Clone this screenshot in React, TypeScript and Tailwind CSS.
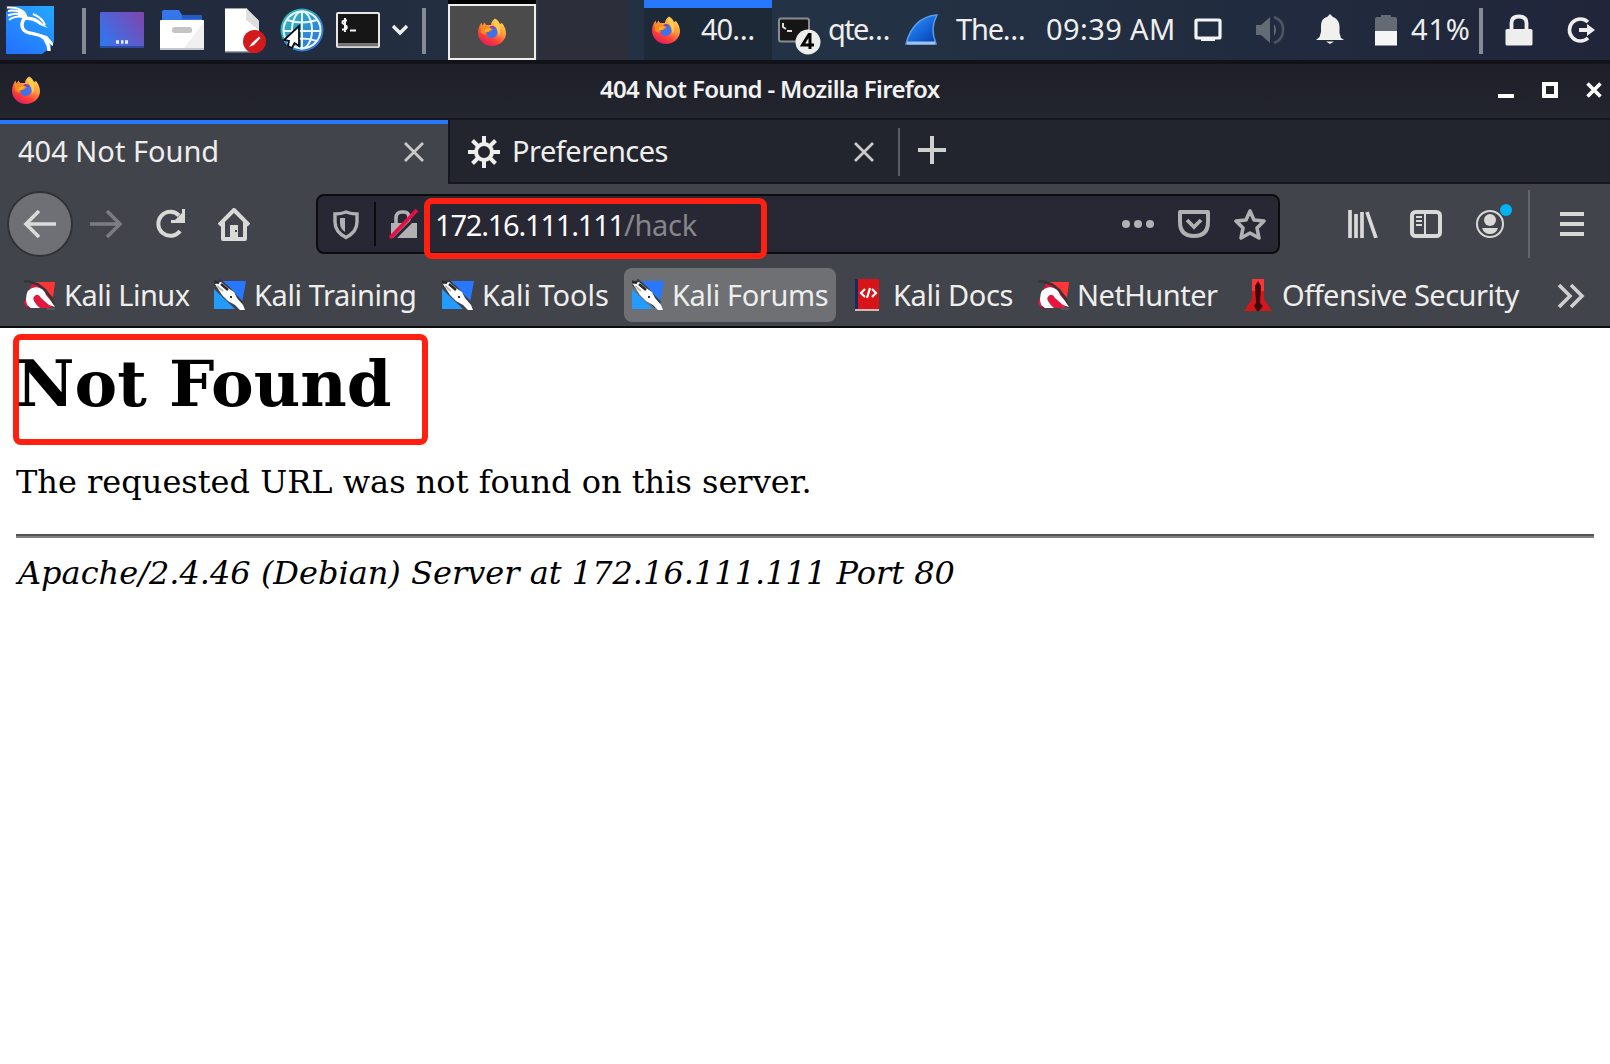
import type { ReactNode } from "react";

function Icon({ w, h, className = "", children }: { w: number; h: number; className?: string; children: ReactNode }) {
  return (
    <svg width={w} height={h} viewBox={`0 0 ${w} ${h}`} className={`block shrink-0 ${className}`} fill="none">
      {children}
    </svg>
  );
}

function Firefox({ className = "" }: { className?: string }) {
  return (
    <Icon w={28} h={28} className={className}>
      <defs>
        <linearGradient id="ffx" x1="22" y1="2" x2="8" y2="27" gradientUnits="userSpaceOnUse">
          <stop offset="0" stopColor="#ffd84f" />
          <stop offset="0.4" stopColor="#ff9640" />
          <stop offset="0.72" stopColor="#ff4038" />
          <stop offset="1" stopColor="#e01f5c" />
        </linearGradient>
      </defs>
      <path
        d="M17 0.5C20 2 21 4 22 6L24 5C27 9 28 12 28 16C27.500 23 21 28 14 28C6 28 0 22 0 14.500C0 10.500 1.500 7.500 3.500 4.500L4.500 7.500L6.500 4.500L8 7L13 7C13 4 15 2 17 0.500Z"
        fill="url(#ffx)"
      />
      <path d="M9 12L13 9L18 10C20 13 20 16 18 18C15.500 21 11 20.500 9 18Z" fill="#3d72e8" />
      <path d="M11 9.500C13 7.500 16 7.500 18 10L15 11Z" fill="#8345b5" />
      <path d="M3 8L8 7.500L12 10L15 11L11 14L8 14L7 17L3 15Z" fill="#ff8a1e" />
      <path d="M7 11L13 10.500L10 13.500L7 14Z" fill="#ffb52b" />
      <path d="M17 2C21 5 24 10 21 18C19 15 21 11 17 8C15.500 6 16 4 17 2Z" fill="#ffd351" opacity="0.8" />
    </Icon>
  );
}

function KaliDragon() {
  return (
    <Icon w={48} h={48} className="ml-1.5">
      <defs>
        <linearGradient id="kali" x1="40" y1="0" x2="8" y2="48" gradientUnits="userSpaceOnUse">
          <stop offset="0" stopColor="#25a5ff" />
          <stop offset="1" stopColor="#2472ff" />
        </linearGradient>
      </defs>
      <path d="M0 0H48V36L44 42L36 48H0Z" fill="url(#kali)" />
      <path d="M0 0H9L4 3L0 6Z" fill="#3a4152" />
      <path
        d="M1 1.500C7 1 14 2 19 7M2 5C8 4 14 5 18 9M2 9.500C8 7 13 7 18 10M3 14C8 10 13 10 19 11"
        stroke="#fff"
        strokeWidth="2"
      />
      <path d="M12 3L20 7L22 12L19 14L12 10Z" fill="#fff" />
      <path d="M19 12C15 16 15 22 19 25C24 29 33 26 39 33C41 36 43 40 43 45" stroke="#fff" strokeWidth="3.400" />
      <path d="M34 28L41 30L47 37L47 40L41 36Z" fill="#fff" />
      <path d="M20 11C26 10 31 12 36 17L42 22L34 19C29 15 25 14 20 14Z" fill="#fff" />
      <path d="M27 8C32 10 37 14 39 19" stroke="#fff" strokeWidth="2" />
    </Icon>
  );
}

function Separator({ className }: { className: string }) {
  return <div className={`h-[46px] w-1 shrink-0 bg-[#858b94] ${className}`} />;
}

function Panel() {
  return (
    <header className="flex h-15 items-start bg-linear-to-r from-[#22283c] via-[#233345] to-[#20253a] text-[29px] leading-[38px] whitespace-nowrap text-[#eeeeec]">
      <div className="pt-1.5">
        <KaliDragon />
      </div>
      <Separator className="mt-2 ml-7" />
      <Icon w={44} h={36} className="mt-3 ml-[14px]">
        <defs>
          <linearGradient id="desk" x1="2" y1="34" x2="42" y2="4" gradientUnits="userSpaceOnUse">
            <stop offset="0" stopColor="#2f77f2" />
            <stop offset="1" stopColor="#7b49b0" />
          </linearGradient>
        </defs>
        <rect width="44" height="36" rx="1" fill="url(#desk)" />
        <path d="M0 34H44V36H0Z" fill="#2c4b9e" />
        <path d="M16 30h3M21 30h2.500M25 30h3" stroke="#e6ebfa" strokeWidth="3.500" />
      </Icon>
      <Icon w={44} h={40} className="mt-2.5 ml-4">
        <path d="M2 2Q2 0 4 0H19L22 5H40Q42 5 42 8V12H2Z" fill="#3577ea" />
        <path d="M22 5h20v4H22Z" fill="#285bc2" />
        <rect y="10" width="44" height="30" rx="1" fill="#fff" />
        <path d="M44 12V38H24Z" fill="#f0f0f0" />
        <path d="M0 38H44V40H0Z" fill="#c5c6c9" />
        <rect x="12" y="17" width="20" height="6" rx="2.500" fill="#c4c4c4" />
      </Icon>
      <Icon w={42} h={46} className="mt-2 ml-5">
        <path d="M1 0H22L35 13V44H1Z" fill="#fff" />
        <path d="M22 0L35 13V22L22 12Z" fill="#dedede" />
        <path d="M1 43H28V44.500H1ZM1 0H22V1H1Z" fill="#9ea1a7" />
        <circle cx="30.500" cy="33.500" r="11.500" fill="#d4191c" />
        <path d="M25 39L28 35L35 28.500L36.500 30L30 37Z" fill="#fff" />
      </Icon>
      <Icon w={46} h={46} className="mt-2 ml-[13px]">
        <defs>
          <linearGradient id="globe" x1="4" y1="6" x2="38" y2="40" gradientUnits="userSpaceOnUse">
            <stop offset="0" stopColor="#2cbabc" />
            <stop offset="1" stopColor="#3371df" />
          </linearGradient>
        </defs>
        <circle cx="23" cy="22" r="21.500" fill="url(#globe)" />
        <g stroke="#e8f6f9" strokeWidth="2">
          <circle cx="23" cy="22" r="18.500" />
          <ellipse cx="23" cy="22" rx="10" ry="18.500" />
          <path d="M23 3V41M4 23H42M8 12Q23 17 38 12M8 33Q23 28 38 33" />
        </g>
        <path d="M20 18V38L15.500 35L13 40L9 38L10 33L5 32Z" fill="#fff" stroke="#0c0e12" strokeWidth="1.800" />
      </Icon>
      <Icon w={44} h={36} className="mt-3 ml-[11px]">
        <rect x="1" y="1" width="42" height="34" rx="1" fill="#161616" stroke="#e6e6e6" strokeWidth="2" />
        <path d="M2 32H42" stroke="#777" strokeWidth="2" />
        <path d="M2 34.500H42" stroke="#c4c4c4" strokeWidth="2" />
        <path d="M11 8.500H8.500Q6 9 6.500 11L10.500 14Q11.500 17 9 17.500H6M9 6V20M14 18.500H20" stroke="#f4f4f4" strokeWidth="2" />
      </Icon>
      <Icon w={18} h={12} className="mt-6 ml-[11px]">
        <path d="M2 2L9 9L16 2" stroke="#eeeeec" strokeWidth="3.400" />
      </Icon>
      <Separator className="mt-2 ml-[13px]" />
      <div className="ml-[22px] h-15 w-22 shrink-0 bg-black pt-1">
        <div className="flex h-14 items-start border-2 border-[#eeeeec] bg-[#4b4b4b]">
          <Firefox className="mt-3 ml-7" />
        </div>
      </div>
      <div className="h-15 w-[92px] shrink-0 border-l-2 border-[#35384a] bg-[#2c2e39]" />
      <div className="ml-4 flex h-15 w-32 shrink-0 items-start border-t-8 border-[#2777ff] bg-[#1d2936]">
        <Firefox className="mt-2 ml-2" />
        <span className="mt-0.5 ml-[21px] tracking-[-1px]">40…</span>
      </div>
      <Icon w={46} h={38} className="mt-[17px] ml-1.5">
        <rect x="1" y="1.500" width="30" height="23" rx="2" fill="#151515" stroke="#898d90" strokeWidth="2" />
        <path d="M5 6V10L8 12M9 14H14" stroke="#ddd" strokeWidth="2" />
        <circle cx="30" cy="25" r="12.500" fill="#eeeeec" />
        <path d="M32 32V17.500H31L24.500 28H36" stroke="#080808" strokeWidth="3" />
      </Icon>
      <span className="mt-2.5 ml-1 w-16 tracking-[-1.7px]">qte…</span>
      <Icon w={34} h={32} className="mt-3.5 ml-[13px]">
        <defs>
          <linearGradient id="fin" x1="8" y1="4" x2="28" y2="28" gradientUnits="userSpaceOnUse">
            <stop offset="0" stopColor="#2589ff" />
            <stop offset="1" stopColor="#0645b5" />
          </linearGradient>
        </defs>
        <path d="M32 1C27 10 27 20 31 30H1C5 14 15 2 32 1Z" fill="url(#fin)" stroke="#5d9be4" strokeWidth="1.500" />
        <path d="M2 29H30" stroke="#9cc3f3" strokeWidth="3" />
      </Icon>
      <span className="mt-2.5 ml-[17px] w-[72px] tracking-[-1.2px]">The…</span>
      <span className="mt-2.5 ml-[18px] w-[131px] tracking-[0.4px]">09:39 AM</span>
      <Icon w={28} h={24} className="mt-[18px] ml-[17px]">
        <rect x="2" y="2" width="24" height="18" rx="1" stroke="#f4f4f4" strokeWidth="3.200" />
        <path d="M7 20.500H21V23H7Z" fill="#f4f4f4" />
      </Icon>
      <Icon w={30} h={30} className="mt-[15px] ml-[33px]">
        <path d="M1 10H6L15 2V28L6 20H1Z" fill="#636b75" />
        <path d="M19 9Q23 15 19 21Z" fill="#636b75" />
        <path d="M19 2Q29 6 28 15Q28 25 19 28" stroke="#4b5662" strokeWidth="2.600" />
      </Icon>
      <Icon w={28} h={30} className="mt-[14px] ml-[31px]">
        <path d="M14 0L17 3C22 5 23.500 9 23.500 13V19L25 24L28 26H0L3.500 23L5 18V12C5 7 7 4 11 3ZM10 27.500H18L14 30Z" fill="#f0f0ef" />
      </Icon>
      <Icon w={24} h={32} className="mt-[14px] ml-[30px]">
        <path d="M7 1H17V3H21Q23 3 23 5V19H1V5Q1 3 3 3H7Z" fill="#646b75" />
        <path d="M1 17H23V31.500H1Z" fill="#f5f5f5" />
      </Icon>
      <span className="mt-2.5 ml-[13px] w-[64px] tracking-[0.8px]">41%</span>
      <Separator className="mt-2 ml-1" />
      <Icon w={28} h={32} className="mt-[14px] ml-[22px]">
        <rect x="0.500" y="15" width="27" height="16.500" rx="1.500" fill="#eeeeec" />
        <path d="M6.500 16V9Q6.500 2.500 14 2.500T21.500 9V16" stroke="#eeeeec" strokeWidth="3.800" />
      </Icon>
      <Icon w={30} h={28} className="mt-4 ml-[33px]">
        <path d="M22 6A11 11 0 1 0 22 22" stroke="#eeeeec" strokeWidth="3.600" />
        <path d="M13 12H21V8L29 14L21 20V16H13Z" fill="#eeeeec" />
      </Icon>
    </header>
  );
}

function TitleBar() {
  return (
    <div className="flex h-15 items-start border-t-4 border-b-2 border-t-[#111318] border-b-[#17181e] bg-linear-to-b from-[#1e1f28] to-[#23252e]">
      <Firefox className="mt-3 ml-3" />
      <h1 className="mt-[9px] ml-[560px] w-[342px] text-[24px] leading-8 font-semibold tracking-[-0.67px] whitespace-nowrap text-[#f2f2f2]">
        404 Not Found - Mozilla Firefox
      </h1>
      <div className="mt-[18px] ml-auto flex gap-7 pr-2">
        <Icon w={16} h={16}>
          <path d="M0 14H16" stroke="#fff" strokeWidth="4" />
        </Icon>
        <Icon w={16} h={16}>
          <rect x="2" y="2" width="12" height="12" stroke="#fff" strokeWidth="4" />
        </Icon>
        <Icon w={16} h={16}>
          <path d="M1.500 1.500L14.500 14.500M14.500 1.500L1.500 14.500" stroke="#fff" strokeWidth="3.600" />
        </Icon>
      </div>
    </div>
  );
}

function Close({ className }: { className: string }) {
  return (
    <Icon w={20} h={20} className={className}>
      <path d="M1 1L19 19M19 1L1 19" stroke="#c9c9c9" strokeWidth="2.800" />
    </Icon>
  );
}

function TabStrip() {
  return (
    <div className="flex h-16 shrink-0 text-[29px] leading-[38px] whitespace-nowrap text-[#eeeeec]">
      <div className="flex w-[448px] items-start border-t-4 border-[#2777ff] bg-[#42444b]">
        <span className="mt-2 ml-[18px] w-[210px]">404 Not Found</span>
        <Close className="mt-[18px] ml-[176px]" />
      </div>
      <div className="flex flex-1 items-start border-b-2 border-l-2 border-[#17181e] bg-[#23252e]">
        <Icon w={32} h={32} className="mt-4 ml-[18px]">
          <g stroke="#eeeeec" strokeWidth="4">
            <path d="M16 0V8M16 24V32M0 16H8M24 16H32M4.500 4.500L10 10M22 22L27.500 27.500M27.500 4.500L22 10M10 22L4.500 27.500" />
            <circle cx="16" cy="16" r="8" />
          </g>
        </Icon>
        <span className="mt-3 ml-3 w-[160px] tracking-[-0.5px]">Preferences</span>
        <Close className="mt-[22px] ml-[182px]" />
        <div className="mt-2 ml-6 h-12 w-0.5 bg-[#5b5d64]" />
        <Icon w={28} h={28} className="mt-4 ml-[18px]">
          <path d="M14 0V28M0 14H28" stroke="#d0d0d0" strokeWidth="4" />
        </Icon>
      </div>
    </div>
  );
}

function NavBar() {
  return (
    <div className="flex h-[76px] items-start">
      <div className="mt-[7px] ml-[7px] flex size-[66px] shrink-0 items-center justify-center rounded-full border-2 border-[#303238] bg-[#6f7075]">
        <Icon w={34} h={30}>
          <path d="M33 15H3M16 2L3 15L16 28" stroke="#dadad8" strokeWidth="3.600" />
        </Icon>
      </div>
      <Icon w={34} h={30} className="mt-[25px] ml-4">
        <path d="M1 15H31M18 2L31 15L18 28" stroke="#7c7d81" strokeWidth="3.600" />
      </Icon>
      <Icon w={32} h={30} className="mt-[25px] ml-8">
        <path d="M25 22A12 12 0 1 1 24 6.500" stroke="#d9d9d7" strokeWidth="4" />
        <path d="M30 0V14H16V11H20L27 4V0Z" fill="#d9d9d7" />
      </Icon>
      <Icon w={32} h={34} className="mt-6 ml-[31px]">
        <path d="M1 17L16 2L31 17M5 14V31H27V14" stroke="#d9d9d7" strokeWidth="4" strokeLinejoin="round" />
        <path d="M12 17H20V32H12Z" fill="#d9d9d7" />
        <path d="M17 22h2v2h-2Z" fill="#42444b" />
      </Icon>
      <div className="mt-2.5 ml-[66px] flex h-[60px] w-[964px] shrink-0 items-start rounded-lg border-2 border-[#0c0c0f] bg-[#272834]">
        <Icon w={26} h={30} className="mt-3.5 ml-[15px]">
          <path d="M2 4Q8 4 13 2Q18 4 24 4V12Q24 22 13 27.500Q2 22 2 12Z" stroke="#b1b1b3" strokeWidth="3.400" />
          <path d="M7 8H12V22Q7 19 7 13Z" fill="#b1b1b3" />
        </Icon>
        <div className="mt-1.5 ml-[15px] h-11 w-0.5 bg-[#0c0c0f]" />
        <Icon w={30} h={30} className="mt-[13px] ml-[13px]">
          <path d="M2 14H28V29H2Z" fill="#b1b1b3" />
          <path d="M7 15V9Q7 3 13 3H15Q20 3 20 9V15" stroke="#b1b1b3" strokeWidth="3.600" />
          <path d="M4 31L30 5" stroke="#272834" strokeWidth="3" />
          <path d="M1 29L28 1" stroke="#e80f46" strokeWidth="3.800" />
        </Icon>
        <div className="mt-0.5 ml-[5px] flex h-[61px] w-[343px] shrink-0 items-start rounded-lg border-6 border-[#ff2012] pl-[5px] text-[29px] leading-[38px] tracking-[-1.2px] whitespace-nowrap">
          <span className="mt-0.5 text-[#fbfbfb]">172.16.111.111</span>
          <span className="mt-0.5 tracking-[-0.3px] text-[#86868a]">/hack</span>
        </div>
        <Icon w={32} h={8} className="mt-6 ml-[355px]">
          <circle cx="4" cy="4" r="4" fill="#b1b1b3" />
          <circle cx="16" cy="4" r="4" fill="#b1b1b3" />
          <circle cx="28" cy="4" r="4" fill="#b1b1b3" />
        </Icon>
        <Icon w={32} h={28} className="mt-[14px] ml-6">
          <path d="M2 2H30V12Q30 26 16 26T2 12Z" stroke="#b1b1b3" strokeWidth="4" strokeLinejoin="round" />
          <path d="M9 10L16 17L23 10" stroke="#b1b1b3" strokeWidth="3.800" />
        </Icon>
        <Icon w={32} h={32} className="mt-3 ml-6">
          <path d="M16 3L20 12L30 13L23 20L25 30L16 25L7 30L9 20L2 13L12 12Z" stroke="#b1b1b3" strokeWidth="3.600" strokeLinejoin="round" />
        </Icon>
      </div>
      <Icon w={30} h={28} className="mt-[26px] ml-[68px]">
        <path d="M2 0V28M8 4V28M14 2V28M19 2L28 28" stroke="#d9d9d7" strokeWidth="3.700" />
      </Icon>
      <Icon w={32} h={28} className="mt-[26px] ml-8">
        <rect x="2" y="2" width="28" height="24" rx="3.500" stroke="#d9d9d7" strokeWidth="4" />
        <path d="M15 2V26M6 7H12M6 11H12M6 15H12" stroke="#d9d9d7" strokeWidth="2" />
      </Icon>
      <div className="relative mt-[26px] ml-[34px]">
        <Icon w={28} h={28}>
          <circle cx="14" cy="14" r="13" stroke="#d9d9d7" strokeWidth="2" />
          <circle cx="14" cy="10" r="6" fill="#d9d9d7" />
          <path d="M6 18H22Q20 24 14 24T6 18Z" fill="#d9d9d7" />
        </Icon>
        <span className="absolute -top-1.5 left-6 size-3 rounded-full bg-[#00b3f4]" />
      </div>
      <div className="mt-1.5 ml-6 h-[68px] w-0.5 bg-[#62646a]" />
      <Icon w={24} h={24} className="mt-7 ml-[30px]">
        <path d="M0 2H24M0 12H24M0 22H24" stroke="#d9d9d7" strokeWidth="4" />
      </Icon>
    </div>
  );
}

function RedKali() {
  return (
    <Icon w={32} h={30}>
      <path d="M9 2H31L29 15L27 28H3L0 23L4 12Z" fill="#e3173d" />
      <path d="M9 2H31L29 17L15 6Z" fill="#ff3538" />
      <path d="M0 1.500H5L14 4.500L21 10L27 18L30 25" stroke="#3a3338" strokeWidth="2.600" />
      <path d="M2 19Q2 8 12 7Q20 8 22 15L27 21L31 27L25 25L17 18Q15 14 12 15Q8 17 10 21Q12 25 16 28H7Q2 26 2 19Z" fill="#fff" />
      <path d="M2 28L4 26L7 29Z" fill="#8b1034" />
      <path d="M23 29H31" stroke="#55565a" strokeWidth="2" />
    </Icon>
  );
}

function BlueKali() {
  return (
    <Icon w={32} h={32}>
      <path d="M8 2H32L28 24L24 20Z" fill="#2777ff" />
      <path d="M0 10L21 30H0Z" fill="#249cff" />
      <path d="M3 3L13 12L19 19L26 26" stroke="#3a3d42" strokeWidth="9" />
      <path d="M1 5L7 3L14 9L20 13L23 19L29 26L31 31L26 31L21 26L14 22L8 16Z" fill="#fff" />
      <path d="M0 2.500L5 4M7 5L14 11" stroke="#292929" strokeWidth="2.500" />
      <path d="M3 7L9 12" stroke="#bdb9b5" strokeWidth="2" />
      <path d="M16 17h2v2h-2Z" fill="#333" />
    </Icon>
  );
}

function DocsBook() {
  return (
    <Icon w={28} h={32}>
      <path d="M1 0H5V30H1Z" fill="#172a63" />
      <path d="M4 0H25V30H4Z" fill="#d81419" />
      <path d="M1 30H25V32H1Z" fill="#d6b5b5" />
      <path d="M11 10L7 14L11 18M18 10L22 14L18 18M16 9L13 19" stroke="#fff" strokeWidth="2.200" />
    </Icon>
  );
}

function OffSec() {
  return (
    <Icon w={28} h={32}>
      <path d="M8 0H20L20 20L28 32H0L8 20Z" fill="#d3171b" />
      <path d="M8 0H20V12H8Z" fill="#fa3537" />
      <path d="M14 2L17 7L16 24L19 27L15 32H13L10 27L12 24L11 7Z" fill="#3d090b" />
    </Icon>
  );
}

function Bookmark({ icon, label, className, textClass }: { icon: ReactNode; label: string; className: string; textClass: string }) {
  return (
    <div className={`flex h-[54px] shrink-0 items-center rounded-lg ${className}`}>
      {icon}
      <span className={textClass}>{label}</span>
    </div>
  );
}

function BookmarksBar() {
  return (
    <div className="flex h-[68px] items-start border-b-2 border-[#0c0c0f] pt-2 text-[29px] leading-[38px] whitespace-nowrap text-[#eeeeec]">
      <Bookmark icon={<RedKali />} label="Kali Linux" className="ml-6 w-[190px]" textClass="ml-2 tracking-[-0.5px]" />
      <Bookmark icon={<BlueKali />} label="Kali Training" className="w-[228px]" textClass="ml-2 tracking-[-0.4px]" />
      <Bookmark icon={<BlueKali />} label="Kali Tools" className="w-[182px]" textClass="ml-2 tracking-[-0.05px]" />
      <Bookmark icon={<BlueKali />} label="Kali Forums" className="w-[212px] bg-[#6f7074] pl-2" textClass="ml-2 tracking-[-0.35px]" />
      <Bookmark icon={<DocsBook />} label="Kali Docs" className="ml-[18px] w-[184px]" textClass="ml-[11px] tracking-[-0.35px]" />
      <Bookmark icon={<RedKali />} label="NetHunter" className="w-[206px]" textClass="ml-[7px] tracking-[-0.5px]" />
      <Bookmark icon={<OffSec />} label="Offensive Security" className="w-[296px]" textClass="ml-2.5 tracking-[-0.5px]" />
      <Icon w={28} h={26} className="mt-[15px] ml-[17px]">
        <path d="M2 2L13 13L2 24M14 2L25 13L14 24" stroke="#cfcfcd" strokeWidth="3.600" />
      </Icon>
    </div>
  );
}

function Page() {
  return (
    <main className="flex-1 bg-white pr-4 pl-[13px] font-['DejaVu_Serif',serif] whitespace-nowrap text-black">
      <div className="mt-[6px] h-[111px] w-[415px] rounded-lg border-6 border-[#ff2012]">
        <h2 className="-ml-[3px] pt-1.5 text-[64px] leading-[76px] font-bold">Not Found</h2>
      </div>
      <p className="mt-[18px] ml-[3px] text-[32px] leading-[38px]">The requested URL was not found on this server.</p>
      <hr className="mt-[33px] ml-[3px] h-1 border-t-2 border-b-2 border-t-[#555] border-b-[#808080]" />
      <address className="mt-4 ml-[5px] text-[32px] leading-[38px] italic">Apache/2.4.46 (Debian) Server at 172.16.111.111 Port 80</address>
    </main>
  );
}

export default function App() {
  return (
    <div className="flex h-[1064px] w-[1610px] flex-col overflow-hidden bg-white font-['Noto_Sans',sans-serif]">
      <Panel />
      <TitleBar />
      <TabStrip />
      <div className="bg-[#42444b]">
        <NavBar />
        <BookmarksBar />
      </div>
      <Page />
    </div>
  );
}
